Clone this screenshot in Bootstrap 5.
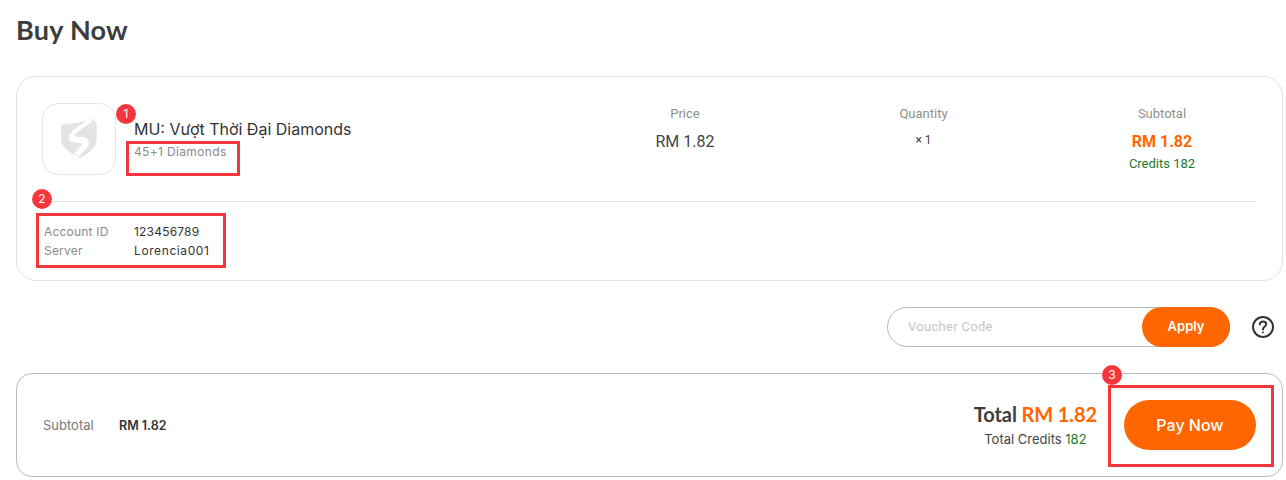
<!DOCTYPE html>
<html lang="en">
<head>
    <meta charset="UTF-8">
    <title>Buy Now</title>
    <meta name="viewport" content="width=device-width, initial-scale=1">
    <link href="https://cdn.jsdelivr.net/npm/bootstrap@5.3.2/dist/css/bootstrap.min.css" rel="stylesheet">
    <script src="https://cdn.jsdelivr.net/npm/bootstrap@5.3.2/dist/js/bootstrap.bundle.min.js"></script>
    <style>
        body {
            font-family: Inter, "Liberation Sans", sans-serif;
            background-color: #fff;
            color: #333;
            overflow: hidden;
        }
        .page-wrap {
            position: relative;
            padding: 14px 3px 0 16px;
        }
        .page-title {
            font-family: Lato, sans-serif;
            font-size: 27px;
            font-weight: 700;
            line-height: 32px;
            letter-spacing: .25px;
            color: #3d3d3d;
            margin: 0 0 30px;
        }
        .order-box {
            border: 1px solid #e3e3e3;
            border-radius: 20px;
            height: 205px;
            padding: 26px 26px 0 25px;
        }
        .game-logo {
            width: 74px;
            height: 72px;
            border: 1px solid #e6e6e6;
            border-radius: 16px;
        }
        .game-name {
            font-size: 16px;
            line-height: 20px;
            color: #333;
        }
        .game-sku {
            font-size: 12px;
            line-height: 16px;
            color: #8a8a8a;
            letter-spacing: .35px;
            margin-top: 5px;
        }
        .game-info {
            padding: 16px 0 0 18px;
            width: 469px;
        }
        .col-head {
            font-family: Roboto, sans-serif;
            font-size: 13px;
            line-height: 18px;
            color: #8f8f8f;
            margin: 2px 0 7px;
        }
        .col-price { width: 200px; }
        .col-qty { width: 277px; }
        .col-sub { width: 200px; margin-right: -7px; }
        .price-val {
            font-family: Roboto, sans-serif;
            font-size: 16px;
            line-height: 24px;
            color: #444;
        }
        .qty-val {
            font-family: Roboto, sans-serif;
            font-size: 12px;
            line-height: 18px;
            color: #444;
            padding-top: 1px;
        }
        .sub-val {
            font-family: Roboto, sans-serif;
            font-size: 16px;
            font-weight: 700;
            line-height: 24px;
            color: #ff6600;
        }
        .credit-val {
            font-family: Roboto, sans-serif;
            font-size: 13px;
            line-height: 20px;
            color: #1a7a2e;
        }
        .order-rule {
            border-top: 1px solid #e3e3e3;
            margin: 26px 0 0;
            opacity: 1;
        }
        .account-rows {
            font-size: 12px;
            line-height: 19px;
            margin: 20px 0 0 2px;
            letter-spacing: .2px;
        }
        .account-label {
            width: 90px;
            color: #8a8a8a;
        }
        .account-val {
            color: #333;
        }
        .account-wide {
            letter-spacing: .6px;
        }
        .voucher-row {
            margin: 26px 8px 26px 0;
        }
        .voucher-box {
            width: 343px;
            height: 40px;
            border: 1px solid #bbb;
            border-radius: 20px;
        }
        .voucher-box input {
            font-family: Roboto, sans-serif;
            font-size: 13px;
            letter-spacing: .3px;
            padding: 0 0 0 20px;
            color: #333;
            background: transparent;
            border: 0;
            outline: 0;
            min-width: 0;
        }
        .voucher-box input::placeholder {
            color: #c6c6c6;
        }
        .btn-apply {
            width: 88px;
            height: 40px;
            margin: -1px -1px -1px 0;
            border: 0;
            border-radius: 20px;
            background-color: #ff6600;
            color: #fff;
            font-size: 13px;
            font-weight: 600;
            padding: 0;
        }
        .help-icon {
            margin-left: 21px;
        }
        .total-box {
            border: 1px solid #bbb;
            border-radius: 16px;
            height: 104px;
            padding: 2px 26px 0 26px;
        }
        .sum-label {
            width: 76px;
            font-size: 13px;
            color: #777;
        }
        .sum-val {
            font-size: 12.5px;
            font-weight: 600;
            color: #333;
        }
        .total-line {
            font-family: Lato, sans-serif;
            font-size: 20px;
            font-weight: 700;
            line-height: 26px;
            letter-spacing: -.1px;
            color: #3d3d3d;
            margin-top: -2px;
        }
        .total-line span {
            color: #ff6600;
        }
        .total-credits {
            font-size: 13px;
            line-height: 20px;
            color: #444;
            margin-top: 2px;
        }
        .total-credits span {
            color: #1a7a2e;
        }
        .total-right {
            margin-right: 11px;
            text-align: center;
        }
        .btn-pay {
            width: 132px;
            height: 50px;
            margin: -2px 0 0 16px;
            border: 0;
            border-radius: 25px;
            background-color: #ff6600;
            color: #fff;
            font-size: 16px;
            font-weight: 500;
            padding: 0;
        }
        .mark-box {
            position: absolute;
            border: 3px solid #f4373c;
            pointer-events: none;
        }
        .mark-num {
            position: absolute;
            width: 20px;
            height: 20px;
            border-radius: 50%;
            background-color: #f4373c;
            color: #fff;
            font-size: 12px;
            line-height: 20px;
            text-align: center;
        }
    </style>
</head>
<body>
    <div class="page-wrap">
        <h1 class="page-title">Buy Now</h1>

        <div class="order-box">
            <div class="d-flex">
                <div class="game-logo d-flex align-items-center justify-content-center flex-shrink-0">
                    <!-- shield with the white S cut across it -->
                    <svg width="46" height="50" viewBox="0 0 138 150">
                        <path d="M15 32 Q60 30 112 15 L122 28 L122 75 C122 100 100 118 72 132 C42 118 15 100 15 75 Z" fill="#e4e4e4"/>
                        <path d="M100 16 C72 33 38 55 38 72 C38 84 55 86 68 86 C78 86 80 90 74 96 L54 119 L68 128 L94 100 C104 88 98 72 82 70 L62 68 C54 67 54 62 60 57 L112 20 Z" fill="#fff"/>
                    </svg>
                </div>
                <div class="game-info flex-shrink-0">
                    <div class="game-name">MU: Vượt Thời Đại Diamonds</div>
                    <div class="game-sku">45+1 Diamonds</div>
                </div>
                <div class="col-price text-center flex-shrink-0">
                    <div class="col-head">Price</div>
                    <div class="price-val">RM 1.82</div>
                </div>
                <div class="col-qty text-center flex-shrink-0">
                    <div class="col-head">Quantity</div>
                    <div class="qty-val">× 1</div>
                </div>
                <div class="col-sub text-center flex-shrink-0">
                    <div class="col-head">Subtotal</div>
                    <div class="sub-val">RM 1.82</div>
                    <div class="credit-val">Credits 182</div>
                </div>
            </div>
            <hr class="order-rule">
            <div class="account-rows">
                <div class="d-flex"><div class="account-label">Account ID</div><div class="account-val">123456789</div></div>
                <div class="d-flex"><div class="account-label">Server</div><div class="account-val account-wide">Lorencia001</div></div>
            </div>
        </div>

        <div class="voucher-row d-flex justify-content-end align-items-center">
            <div class="voucher-box d-flex align-items-center">
                <input class="flex-grow-1" type="text" placeholder="Voucher Code">
                <button class="btn-apply" type="button">Apply</button>
            </div>
            <svg class="help-icon" width="24" height="24" viewBox="0 0 24 24" fill="none" stroke="#333" stroke-width="2">
                <circle cx="12" cy="12" r="10"/>
                <path d="M8.8 9.5 C8.8 7.5 10.3 6.6 12 6.6 C13.8 6.6 15.2 7.7 15.2 9.3 C15.2 11.5 12 11.6 12 14.4" stroke-linecap="round"/>
                <circle cx="12" cy="17.4" r=".6" fill="#333" stroke-width="1"/>
            </svg>
        </div>

        <div class="total-box d-flex align-items-center">
            <div class="sum-label">Subtotal</div>
            <div class="sum-val">RM 1.82</div>
            <div class="ms-auto d-flex align-items-center">
                <div class="total-right">
                    <div class="total-line">Total <span>RM 1.82</span></div>
                    <div class="total-credits">Total Credits <span>182</span></div>
                </div>
                <button class="btn-pay" type="button">Pay Now</button>
            </div>
        </div>

        <div class="mark-box" style="left:126px;top:141px;width:114px;height:35px"></div>
        <div class="mark-box" style="left:36px;top:213px;width:190px;height:55px"></div>
        <div class="mark-box" style="left:1108px;top:385px;width:166px;height:82px"></div>
        <div class="mark-num" style="left:116px;top:104px">1</div>
        <div class="mark-num" style="left:32px;top:189px">2</div>
        <div class="mark-num" style="left:1102px;top:365px">3</div>
    </div>
</body>
</html>
